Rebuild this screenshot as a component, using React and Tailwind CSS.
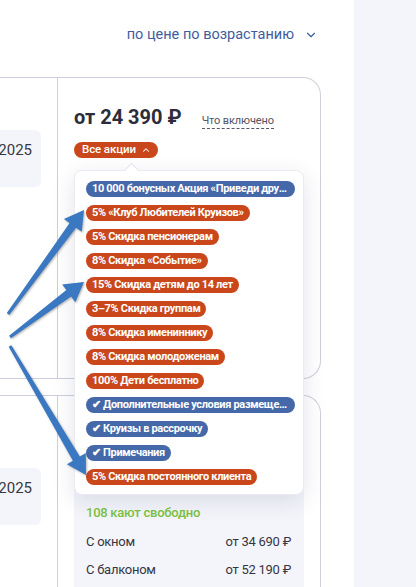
import React from 'react';
import { ChevronDown, ChevronUp } from 'lucide-react';

const promos = [
  { text: '10 000 бонусных Акция «Приведи друга»', tone: 'blue' },
  { text: '5% «Клуб Любителей Круизов»', tone: 'orange' },
  { text: '5% Скидка пенсионерам', tone: 'orange' },
  { text: '8% Скидка «Событие»', tone: 'orange' },
  { text: '15% Скидка детям до 14 лет', tone: 'orange' },
  { text: '3–7% Скидка группам', tone: 'orange' },
  { text: '8% Скидка имениннику', tone: 'orange' },
  { text: '8% Скидка молодоженам', tone: 'orange' },
  { text: '100% Дети бесплатно', tone: 'orange' },
  { text: '✔ Дополнительные условия размещения', tone: 'blue' },
  { text: '✔ Круизы в рассрочку', tone: 'blue' },
  { text: '✔ Примечания', tone: 'blue' },
  { text: '5% Скидка постоянного клиента', tone: 'orange' },
];

// tapered annotation arrow, thin tail -> wide head
function arrowPoints([x1, y1], [x2, y2], tailW = 1.5, neckW = 4, headW = 11, headL = 19) {
  const dx = x2 - x1;
  const dy = y2 - y1;
  const len = Math.hypot(dx, dy);
  const ux = dx / len;
  const uy = dy / len;
  const nx = -uy;
  const ny = ux;
  const bx = x2 - ux * headL;
  const by = y2 - uy * headL;
  const pts = [
    [x1 + nx * tailW, y1 + ny * tailW],
    [bx + nx * neckW, by + ny * neckW],
    [bx + nx * headW, by + ny * headW],
    [x2, y2],
    [bx - nx * headW, by - ny * headW],
    [bx - nx * neckW, by - ny * neckW],
    [x1 - nx * tailW, y1 - ny * tailW],
  ];
  return pts.map((p) => p.map((v) => v.toFixed(1)).join(',')).join(' ');
}

const arrows = [
  [[8, 314], [84, 210]],
  [[10, 337], [84, 282]],
  [[10, 346], [86, 475]],
];

const PromoPill = ({ text, tone }) => (
  <span
    className={`block max-w-[209px] truncate rounded-full px-[6px] text-[11px] font-bold leading-4 tracking-[-0.03em] text-white ${
      tone === 'blue' ? 'bg-[#4568a9]' : 'bg-[#c9471b]'
    }`}
  >
    {text}
  </span>
);

const YearBox = () => (
  <div className="flex h-[57px] w-[41px] justify-end overflow-hidden rounded-r-md bg-[#f4f5fa] pr-[9px] pt-[10px] text-[15px] leading-5 text-[#363843]">
    <span className="shrink-0">2025</span>
  </div>
);

export default function App() {
  return (
    <div className="relative flex h-[587px] w-[416px] overflow-hidden bg-white font-['Roboto',sans-serif]">
      <main className="w-[354px] shrink-0">
        <div className="flex h-[77px] items-start justify-end pr-[36px] pt-[25px]">
          <button className="flex items-center gap-[10px] text-[14.5px] leading-5 text-[#3f5d9c]">
            по цене по возрастанию
            <ChevronDown className="h-[14px] w-[14px]" strokeWidth={2} />
          </button>
        </div>

        {/* card 1 */}
        <div className="relative z-10 flex h-[302px] w-[321px] rounded-r-[18px] border border-l-0 border-[#cdcfdb]">
          <div className="w-[58px] shrink-0 border-r border-[#cdcfdb] pt-[52px]">
            <YearBox />
          </div>
          <div className="relative flex-1 px-4 pt-[25px]">
            <div className="flex items-baseline">
              <span className="text-[20px] font-bold leading-7 text-[#2b2e3a]">от 24 390 ₽</span>
              <span className="ml-5 border-b border-dashed border-[#555866] text-[11px] leading-[14px] tracking-[-0.01em] text-[#505463]">
                Что включено
              </span>
            </div>
            <div className="mt-[11px] flex">
              <span className="flex h-4 items-center gap-[5px] rounded-full bg-[#c9471b] pl-[8px] pr-[7px] text-[11.5px] font-medium tracking-[-0.01em] text-white">
                Все акции
                <ChevronUp className="h-[10px] w-[10px]" strokeWidth={2.5} />
              </span>
            </div>

            <div className="absolute left-4 top-[92px] w-[230px] rounded-lg border border-[#ebecf3] bg-white pb-[9px] pl-[11px] pt-[10px] shadow-[0_6px_22px_rgba(40,50,100,0.13)]">
              <div className="absolute -top-[6px] left-[51px] h-[11px] w-[11px] rotate-45 border-l border-t border-[#e3e4ee] bg-white" />
              <div className="relative flex flex-col items-start gap-2">
                {promos.map((p, i) => (
                  <PromoPill key={i} {...p} />
                ))}
              </div>
            </div>
          </div>
        </div>

        {/* card 2 */}
        <div className="mt-4 flex h-[200px] w-[321px] rounded-tr-[18px] border border-b-0 border-l-0 border-[#cdcfdb]">
          <div className="w-[58px] shrink-0 border-r border-[#cdcfdb] pt-[72px]">
            <YearBox />
          </div>
          <div className="flex-1 px-4 pt-[82px]">
            <div className="rounded-lg bg-[#f4f5fa] pb-4 pl-3 pr-[13px] pt-[25px]">
              <div className="text-[13px] font-medium leading-5 tracking-[-0.02em] text-[#7cc242]">108 кают свободно</div>
              <div className="mt-[9px] flex justify-between text-[13px] leading-5 tracking-[-0.02em] text-[#343642]">
                <span>С окном</span>
                <span>от 34 690 ₽</span>
              </div>
              <div className="mt-2 flex justify-between text-[13px] leading-5 tracking-[-0.02em] text-[#343642]">
                <span>С балконом</span>
                <span>от 52 190 ₽</span>
              </div>
            </div>
          </div>
        </div>
      </main>

      <aside className="flex-1 bg-[#f4f5fa]" />

      <svg
        className="pointer-events-none absolute inset-0 z-20 drop-shadow-[1px_1px_1px_rgba(0,0,0,0.3)]"
        width="416"
        height="587"
        viewBox="0 0 416 587"
      >
        {arrows.map(([a, b], i) => (
          <polygon key={i} points={arrowPoints(a, b)} fill="#3a78c1" />
        ))}
      </svg>
    </div>
  );
}
